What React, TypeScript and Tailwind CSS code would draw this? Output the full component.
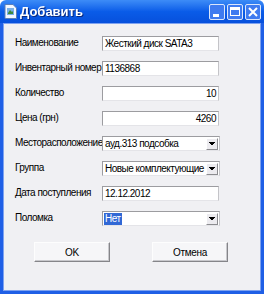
import React from 'react'

const font = { fontFamily: '"Liberation Sans", Arial, sans-serif' }

function TextBox({ value, right }: { value: string; right?: boolean }) {
  return (
    <div
      className={`w-[117px] h-[15px] shrink-0 bg-white border border-t-[#9c9ca0] border-l-[#9c9ca0] border-b-[#e4e4e8] border-r-[#c4c4c8] flex items-center px-[2px] text-[10px] tracking-[-0.5px] leading-none text-black whitespace-nowrap ${right ? 'justify-end' : ''}`}
    >
      {value}
    </div>
  )
}

function Combo({ value, selected }: { value: string; selected?: boolean }) {
  return (
    <div className="w-[118px] h-[15px] shrink-0 bg-white border border-t-[#9c9ca0] border-l-[#9c9ca0] border-b-[#e4e4e8] border-r-[#c4c4c8] flex items-center pl-[1px] text-[10px] tracking-[-0.5px] leading-none text-black whitespace-nowrap">
      <div className="flex-1 flex items-center overflow-hidden">
        <span className={selected ? 'bg-[#3168d5] text-white px-[1px] py-[1px]' : 'px-[1px]'}>{value}</span>
      </div>
      <div className="w-[12px] h-[12px] mr-[1px] shrink-0 bg-[#ecebef] border border-t-white border-l-white border-b-[#8c8c90] border-r-[#8c8c90] flex items-center justify-center">
        <svg width="6" height="4" viewBox="0 0 6 4">
          <path d="M0 0h6v1h-1v1h-1v1h-2v-1h-1v-1h-1z" fill="#000" />
        </svg>
      </div>
    </div>
  )
}

function WinButton({ children }: { children: React.ReactNode }) {
  return (
    <div className="w-[16px] h-[16px] rounded-[2px] border border-[#dbe6fb] bg-[#3f7bf0] flex items-center justify-center">
      {children}
    </div>
  )
}

function PushButton({ label }: { label: string }) {
  return (
    <div className="w-[76px] h-[20px] bg-[#f6f6f8] border border-t-[#fdfdfd] border-l-[#fdfdfd] border-b-[#858589] border-r-[#858589] shadow-[inset_-1px_-1px_0_#c8c8cc] flex items-center justify-center text-[10px] tracking-[-0.3px] text-black">
      {label}
    </div>
  )
}

const rows: { label: string; field: React.ReactNode }[] = [
  { label: 'Наименование', field: <TextBox value="Жесткий диск SATA3" /> },
  { label: 'Инвентарный номер', field: <TextBox value="1136868" /> },
  { label: 'Количество', field: <TextBox value="10" right /> },
  { label: 'Цена (грн)', field: <TextBox value="4260" right /> },
  { label: 'Месторасположение', field: <Combo value="ауд.313 подсобка" /> },
  { label: 'Группа', field: <Combo value="Новые комплектующие" /> },
  { label: 'Дата поступления', field: <TextBox value="12.12.2012" /> },
  { label: 'Поломка', field: <Combo value="Нет" selected /> },
]

export default function App() {
  return (
    <div className="w-[264px] h-[294px] flex flex-col bg-white" style={font}>
      {/* заголовок окна */}
      <div className="h-[23px] rounded-t-[6px] bg-gradient-to-b from-[#3d8cf7] via-[#0a5ce8] to-[#0750dc] flex items-center pl-[4px] pr-[3px]">
        <svg width="14" height="15" viewBox="0 0 14 15" className="mr-[2px]">
          <path d="M1 0.5h8l3.5 3.5v10.5h-11.5z" fill="#f4f8ff" stroke="#5a7fb8" />
          <rect x="3" y="4" width="7" height="7" fill="#7ab0e8" />
          <path d="M4 9l2-3 2 2 1-1v3h-5z" fill="#3e8a3a" />
        </svg>
        <span className="text-white font-bold text-[13px] drop-shadow-[1px_1px_0_#0a2a80]">Добавить</span>
        <div className="ml-auto flex gap-[2px]">
          <WinButton>
            <div className="w-[6px] h-[3px] bg-white mt-[7px] -ml-[3px]" />
          </WinButton>
          <WinButton>
            <div className="w-[10px] h-[9px] border border-white border-t-[3px]" />
          </WinButton>
          <WinButton>
            <svg width="10" height="10" viewBox="0 0 10 10">
              <path d="M1 1l8 8M9 1l-8 8" stroke="#fff" strokeWidth="2" />
            </svg>
          </WinButton>
        </div>
      </div>

      {/* тело окна */}
      <div className="flex-1 bg-[#1f5fe6] px-[3px] pb-[3px]">
        <div className="h-full bg-[#f0f0f3] border border-[#7ea2f0] pt-[12px] pl-[11px] flex flex-col">
          <div className="flex flex-col gap-[10px]">
            {rows.map((r) => (
              <div key={r.label} className="flex items-center h-[15px]">
                <div className="w-[87px] shrink-0 text-[10px] tracking-[-0.5px] text-black leading-none -mt-[2px] whitespace-nowrap">{r.label}</div>
                {r.field}
              </div>
            ))}
          </div>
          <div className="flex mt-[16px] pl-[19px] gap-[42px]">
            <PushButton label="OK" />
            <PushButton label="Отмена" />
          </div>
        </div>
      </div>
    </div>
  )
}
